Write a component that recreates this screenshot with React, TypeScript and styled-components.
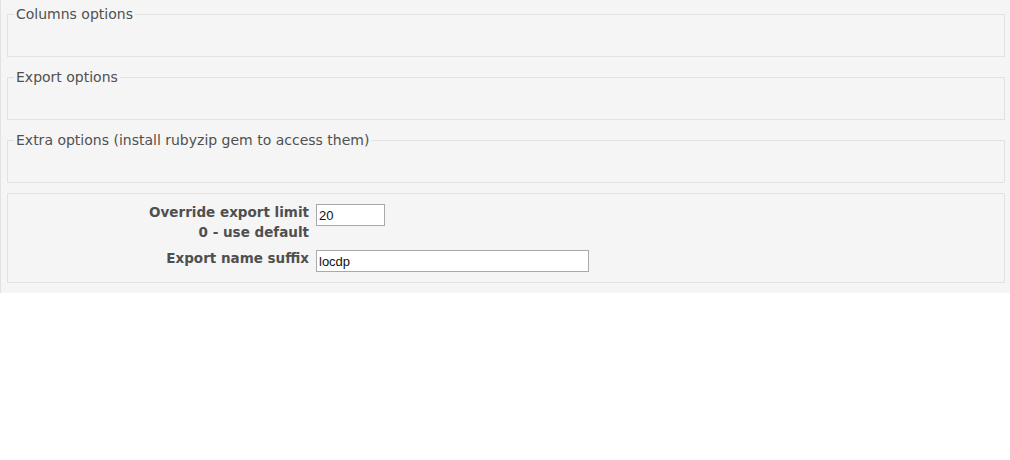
import styled, { createGlobalStyle } from "styled-components";

const GlobalStyle = createGlobalStyle`
  html, body {
    margin: 0;
    padding: 0;
    background: #fff;
  }
  body {
    font-family: "DejaVu Sans", Verdana, sans-serif;
    font-size: 13px;
    color: #505050;
  }
`;

const Panel = styled.div`
  background: #f5f5f5;
  border-left: 1px solid #e2e2e2;
  padding: 5px 5px 10px 6px;
  display: flex;
  flex-direction: column;
`;

const Group = styled.fieldset`
  margin: 0 0 11px 0;
  padding: 0 6px 33px 6px;
  border: 1px solid #e2e2e2;
  min-width: 0;
`;

const Legend = styled.legend`
  padding: 0 2px;
  font-size: 14px;
  line-height: 18px;
  color: #505050;
`;

const FormBox = styled.div`
  margin-top: -1px;
  border: 1px solid #e2e2e2;
  padding: 8px 0 10px 0;
  display: flex;
  flex-direction: column;
  gap: 6px;
`;

const Row = styled.div`
  display: grid;
  grid-template-columns: 301px 1fr;
  column-gap: 7px;
  align-items: start;
`;

const Label = styled.label`
  text-align: right;
  font-weight: bold;
  font-size: 13.5px;
  line-height: 20px;
  color: #4f4f4f;
`;

const Field = styled.input<{ $width: number }>`
  box-sizing: border-box;
  width: ${(p) => p.$width}px;
  height: 22px;
  margin: 2px 0 0 0;
  padding: 0 2px;
  border: 1px solid #a9a9a9;
  background: #fff;
  font-family: "Liberation Sans", Arial, sans-serif;
  font-size: 13px;
  color: #111;
  outline: none;
`;

export default function App() {
  return (
    <>
      <GlobalStyle />
      <Panel>
        <Group>
          <Legend>Columns options</Legend>
        </Group>
        <Group>
          <Legend>Export options</Legend>
        </Group>
        <Group>
          <Legend>Extra options (install rubyzip gem to access them)</Legend>
        </Group>
        <FormBox>
          <Row>
            <Label htmlFor="limit">
              Override export limit
              <br />0 - use default
            </Label>
            <Field id="limit" $width={69} defaultValue="20" />
          </Row>
          <Row>
            <Label htmlFor="suffix">Export name suffix</Label>
            <Field id="suffix" $width={273} defaultValue="locdp" />
          </Row>
        </FormBox>
      </Panel>
    </>
  );
}
